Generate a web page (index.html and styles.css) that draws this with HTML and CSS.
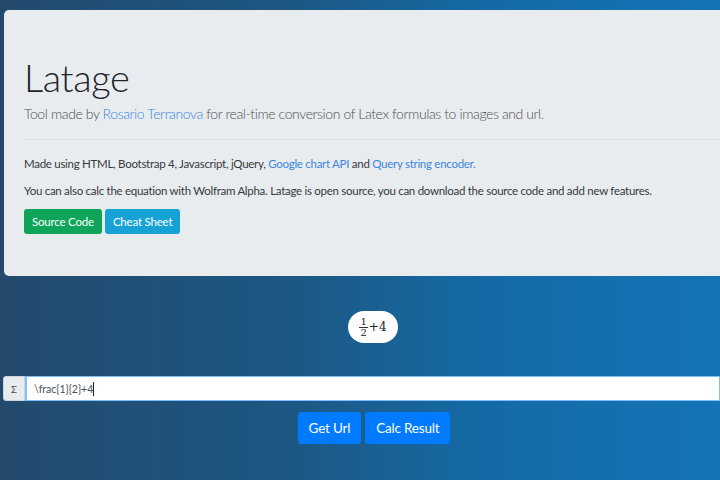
FILE: index.html
```html
<!DOCTYPE html>
<html>
<head>
<meta charset="utf-8">
<link rel="stylesheet" href="styles.css">
</head>
<body>
<div class="page">
  <div class="jumbotron">
    <h1 class="title">Latage</h1>
    <p class="lead">Tool made by <a href="#">Rosario Terranova</a> for real-time conversion of Latex formulas to images and url.</p>
    <hr class="rule">
    <p class="info">Made using HTML, Bootstrap 4, Javascript, jQuery, <a href="#">Google chart API</a> and <a href="#">Query string encoder.</a></p>
    <p class="info">You can also calc the equation with Wolfram Alpha. Latage is open source, you can download the source code and add new features.</p>
    <div class="btns">
      <a class="btn btn-success" href="#">Source Code</a>
      <a class="btn btn-info" href="#">Cheat Sheet</a>
    </div>
  </div>

  <div class="formula-row">
    <div class="formula">
      <span class="frac"><span class="num">1</span><span class="den">2</span></span><span class="plus">+4</span>
    </div>
  </div>

  <div class="input-group">
    <span class="addon">Σ</span>
    <div class="field"><span class="val">\frac{1}{2}+4</span><span class="caret"></span></div>
  </div>

  <div class="actions">
    <a class="btn btn-primary btn-lg" href="#">Get Url</a>
    <a class="btn btn-primary btn-lg" href="#">Calc Result</a>
  </div>
</div>
</body>
</html>
```

FILE: styles.css
```css
html, body {
  margin: 0;
  padding: 0;
  height: 100%;
  overflow: hidden;
}
body {
  background: linear-gradient(90deg, #234a6d 0%, #1d5783 40%, #1569a3 65%, #1474b6 100%);
  font-family: "Lato", "Open Sans", sans-serif;
  color: #212529;
}
.page {
  width: 720px;
  padding-top: 10px;
}
.jumbotron {
  margin-left: 4px;
  margin-right: -20px;
  background: #e9ecef;
  border-radius: 5px;
  padding: 43px 20px 36px 20px;
  height: 187px;
}
.title {
  margin: 0;
  font-weight: 300;
  font-size: 38px;
  line-height: 48px;
  letter-spacing: -0.4px;
  color: #212529;
}
.lead {
  margin: 2px 0 0 0;
  font-size: 14px;
  font-weight: 300;
  line-height: 22px;
  letter-spacing: -0.4px;
  color: #4a4f55;
}
a {
  color: #3b86e0;
  text-decoration: none;
}
.rule {
  border: 0;
  border-top: 1px solid #dcdfe3;
  margin: 14px 0 15px 0;
}
.info {
  margin: 0 0 10px 0;
  font-size: 11.5px;
  line-height: 17px;
  letter-spacing: -0.28px;
  color: #343a40;
}
.btns {
  display: flex;
  gap: 3px;
  margin-top: 0px;
}
.btn {
  display: inline-block;
  border-radius: 3px;
  color: #fff;
  font-size: 11.5px;
  line-height: 15px;
  padding: 5px 8px;
  letter-spacing: -0.2px;
}
.btn-success { background: #0ea45a; }
.btn-info { background: #17a2d6; }
.formula-row {
  display: flex;
  justify-content: center;
  padding-left: 26px;
  margin-top: 35px;
}
.formula {
  background: #fff;
  border-radius: 16px;
  height: 32px;
  padding: 0 11px;
  display: flex;
  align-items: center;
  font-family: "DejaVu Serif", "Liberation Serif", serif;
  color: #222;
}
.frac {
  display: inline-flex;
  flex-direction: column;
  align-items: center;
  font-size: 10px;
  line-height: 10px;
  margin-right: 1px;
}
.num {
  border-bottom: 1px solid #333;
  padding: 0 1px;
}
.plus {
  font-size: 12px;
}
.input-group {
  display: flex;
  margin-top: 33px;
  margin-left: 3px;
  height: 25px;
}
.addon {
  background: #e9ecef;
  border: 1px solid #ced4da;
  border-radius: 3px 0 0 3px;
  font-size: 10px;
  color: #495057;
  display: flex;
  align-items: center;
  justify-content: center;
  box-sizing: border-box;
  width: 22px;
}
.field {
  flex: 1;
  background: #fff;
  border: 1px solid #80bdff;
  border-left: 2px solid #80bdff;
  display: flex;
  align-items: center;
  padding-left: 7px;
  font-size: 10.5px;
  color: #495057;
}
.caret {
  display: inline-block;
  width: 1px;
  height: 14px;
  background: #222;
}
.actions {
  display: flex;
  justify-content: center;
  gap: 4px;
  padding-left: 28px;
  margin-top: 11px;
}
.btn-primary { background: #007bff; }
.btn-lg {
  font-size: 13.5px;
  line-height: 20px;
  padding: 6px 11px;
  border-radius: 3px;
}
```
